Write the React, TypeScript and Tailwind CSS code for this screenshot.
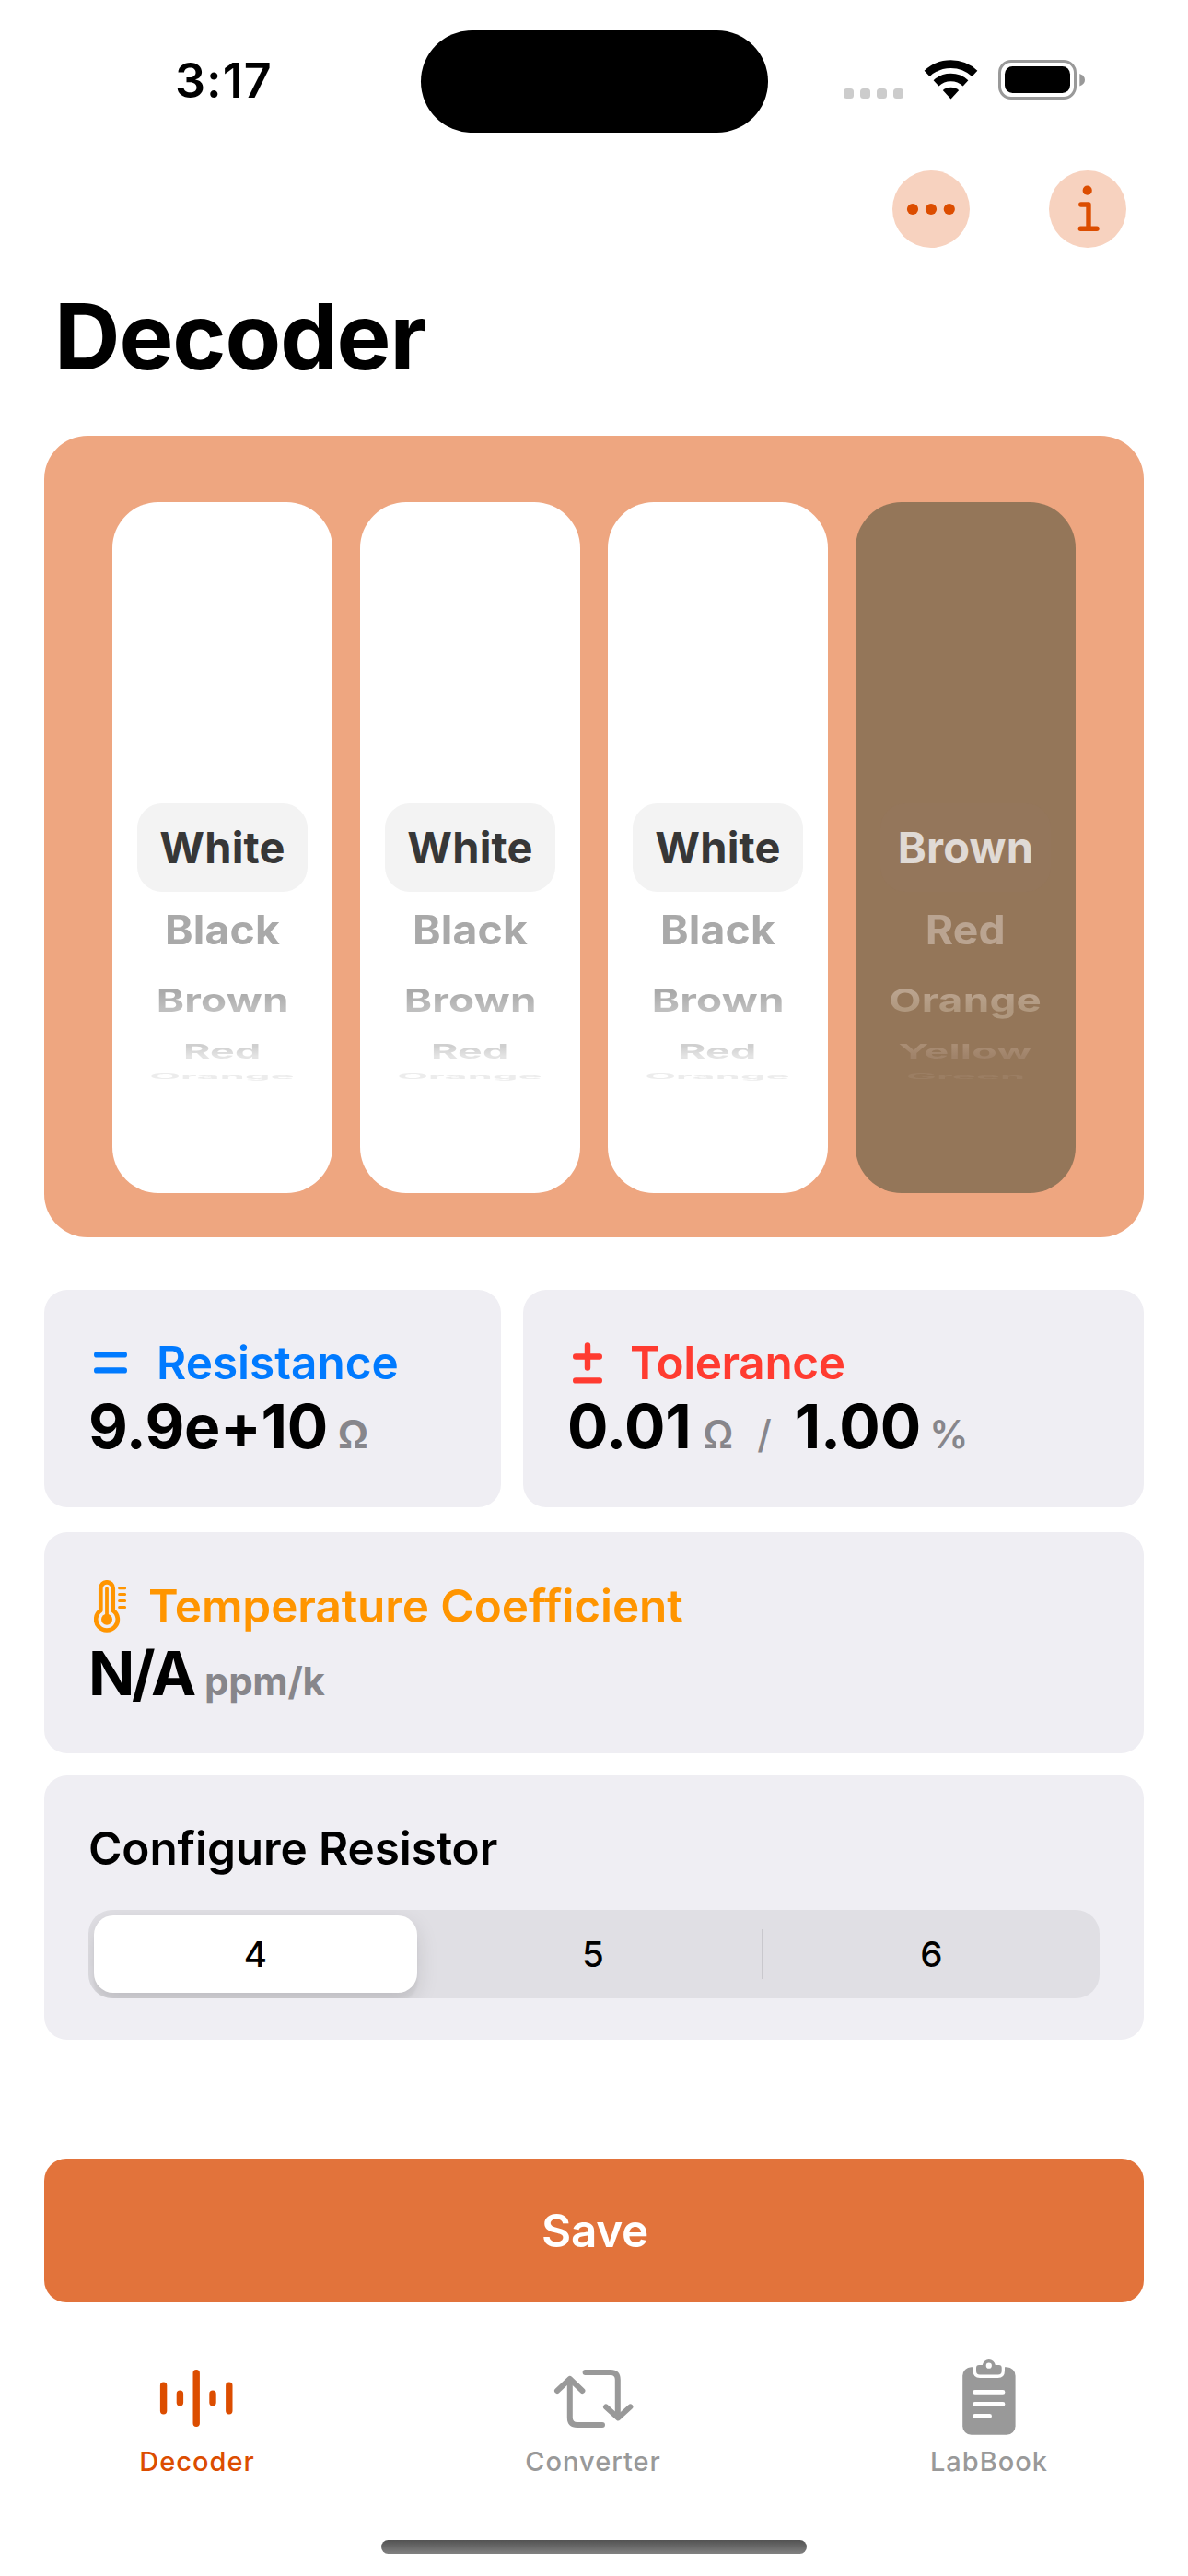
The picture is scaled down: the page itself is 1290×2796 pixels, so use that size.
import type { ReactNode } from 'react';

type PickerTheme = 'light' | 'brown';

const rowText: Record<PickerTheme, string[]> = {
  light: [
    'text-[#373737]',
    'text-[#a9a9a9]',
    'bg-linear-to-b from-[#aaaaaa] from-30% to-[#bfbfbf] to-70% bg-clip-text text-transparent',
    'bg-linear-to-b from-[#cfcfcf] from-30% to-[#e4e4e4] to-70% bg-clip-text text-transparent',
    'text-[#ececec]',
  ],
  brown: [
    'text-[#e0dad5]',
    'text-[#baa491]',
    'bg-linear-to-b from-[#baa38e] from-30% to-[#b0987f] to-70% bg-clip-text text-transparent',
    'bg-linear-to-b from-[#a98d74] from-30% to-[#a0836a] to-70% bg-clip-text text-transparent',
    'text-[#9b7e63]',
  ],
};

const rowBox = ['h-[96px]', 'h-[82px]', 'h-[71px]', 'h-[39px]', 'h-[15px]'];

// Rows flatten as they roll away over the edge of the wheel.
const rowTilt = [
  '',
  'scale-x-[0.985] scale-y-[0.94]',
  'scale-x-[0.975] scale-y-[0.73]',
  'scale-x-[0.955] scale-y-[0.46]',
  'scale-x-[0.925] scale-y-[0.15]',
];

function PickerColumn({ items, theme }: { items: string[]; theme: PickerTheme }) {
  return (
    <div
      className={`flex h-[750px] w-[239px] flex-col items-center overflow-hidden rounded-[50px] pt-[327px] ${
        theme === 'light' ? 'bg-white' : 'bg-[#947659]'
      }`}
    >
      {items.map((item, i) => (
        <div
          key={item}
          className={`flex w-[185px] shrink-0 items-center justify-center ${rowBox[i]} ${
            i === 0 ? (theme === 'light' ? 'rounded-[27px] bg-[#f3f3f3]' : 'rounded-[27px] bg-[#94765b]') : ''
          }`}
        >
          <span
            className={`block text-[47px] leading-[60px] font-[660] tracking-[0.2px] whitespace-nowrap ${rowTilt[i]} ${rowText[theme][i]}`}
          >
            {item}
          </span>
        </div>
      ))}
    </div>
  );
}

function WifiIcon() {
  return (
    <svg width="59" height="43" viewBox="0 0 59 43" className="ml-[22px]">
      <path d="M3.6 14.8 A38 38 0 0 1 55.4 14.8" fill="none" stroke="#000" strokeWidth="8.6" />
      <path d="M13.5 25.3 A23.5 23.5 0 0 1 45.5 25.3" fill="none" stroke="#000" strokeWidth="8.4" />
      <path d="M29.5 42.4 L20.8 33 A13.2 13.2 0 0 1 38.2 33 Z" fill="#000" />
    </svg>
  );
}

function BatteryIcon() {
  return (
    <svg width="95" height="43" viewBox="0 0 95 43" className="ml-[22px]">
      <rect x="1.5" y="1.5" width="82" height="40" rx="12.5" fill="none" stroke="#999" strokeWidth="3" />
      <rect x="7" y="7" width="71" height="29" rx="8.5" fill="#000" />
      <path d="M88.3 15 C92 16.5 94 18.5 94 21.7 C94 24.9 92 27 88.3 28.5 Z" fill="#999" />
    </svg>
  );
}

function StatusBar() {
  return (
    <div className="flex h-[185px] pt-[33px]">
      <div className="flex h-[111px] w-[457px] items-center pb-[1px] pl-[190px]">
        <span className="text-[52px] leading-none font-semibold tracking-[1px]">3:17</span>
      </div>
      <div className="h-[111px] w-[377px] rounded-full bg-black" />
      <div className="mt-8 ml-[82px] flex h-[43px] items-start">
        <div className="mt-[31px] flex gap-[7px]">
          <i className="size-[11px] rounded-[3.5px] bg-[#cccccc]" />
          <i className="size-[11px] rounded-[3.5px] bg-[#cccccc]" />
          <i className="size-[11px] rounded-[3.5px] bg-[#cccccc]" />
          <i className="size-[11px] rounded-[3.5px] bg-[#cccccc]" />
        </div>
        <WifiIcon />
        <BatteryIcon />
      </div>
    </div>
  );
}

function RoundButton({ children }: { children: ReactNode }) {
  return (
    <button className="size-[84px] rounded-full bg-[#f7d2bf]">
      <svg width="84" height="84" viewBox="0 0 84 84" fill="#dc4d00" stroke="none">
        {children}
      </svg>
    </button>
  );
}

function Label({ icon, children, className }: { icon: ReactNode; children: string; className: string }) {
  return (
    <div className={`flex items-center pl-[6px] text-[49.5px] font-[560] whitespace-nowrap ${className}`}>
      {icon}
      <span>{children}</span>
    </div>
  );
}

function EqualIcon() {
  return (
    <svg width="36" height="24" viewBox="0 0 36 24" className="mr-[32px]" stroke="#007aff" strokeWidth="6.4" strokeLinecap="round">
      <path d="M3.2 3.4 H32.8 M3.2 20.4 H32.8" />
    </svg>
  );
}

function PlusMinusIcon() {
  return (
    <svg width="32" height="45" viewBox="0 0 32 45" className="mr-[30px]" stroke="#ff3b30" strokeWidth="6.4" strokeLinecap="round">
      <path d="M3.2 15.5 H28.8 M16 3.4 V27.6 M3.2 41.4 H28.8" />
    </svg>
  );
}

function ThermometerIcon() {
  return (
    <svg width="36" height="58" viewBox="0 0 36 58" className="mr-[23px]" fill="none" stroke="#ff9500" strokeLinecap="round">
      <path d="M7.3 9 a6.7 6.7 0 0 1 13.4 0 V33 A11.8 11.8 0 1 1 7.3 33 Z" strokeWidth="4.7" strokeLinejoin="round" />
      <path d="M14 9.5 V42" strokeWidth="3.8" />
      <circle cx="14" cy="42.8" r="6" fill="#ff9500" stroke="none" />
      <path d="M27.6 8.7 H33.6 M27.6 15.6 H33.6 M27.6 22.5 H33.6 M27.6 29.4 H33.6" strokeWidth="3" />
    </svg>
  );
}

function WaveIcon() {
  return (
    <svg width="90" height="90" viewBox="0 0 90 90" fill="none" stroke="#dc4d00" strokeWidth="7.4" strokeLinecap="round">
      <path d="M7.6 31.3 V58.7 M25.4 40.2 V49.8 M43.2 17.7 V72.3 M61 40.2 V49.8 M78.8 31.3 V58.7" />
    </svg>
  );
}

function RepeatIcon() {
  return (
    <svg width="90" height="90" viewBox="0 0 90 90" fill="none" stroke="#999999" strokeWidth="6" strokeLinecap="round" strokeLinejoin="round">
      <path d="M5 37 L18.8 24 L32.4 37" />
      <path d="M18.8 25 V66 Q18.8 74 26.8 74 H54" />
      <path d="M35.6 17 H63 Q70.8 17 70.8 25 V64" />
      <path d="M58 54.4 L71.3 66.4 L84.4 54.4" />
    </svg>
  );
}

function ClipboardIcon() {
  return (
    <svg width="90" height="90" viewBox="0 0 90 90">
      <rect x="15.2" y="11.2" width="57.4" height="73.6" rx="9.5" fill="#999999" />
      <path d="M26.6 9 V15 Q26.6 23 34 23 H53.5 Q61 23 61 15 V9 Z" fill="#fff" />
      <path
        fillRule="evenodd"
        fill="#999999"
        d="M33 9 H36.8 A7.1 7.1 0 0 1 50.8 9 H54.7 Q57.7 9 57.7 12 V15.5 Q57.7 19.5 53.7 19.5 H34 Q30 19.5 30 15.5 V12 Q30 9 33 9 Z M43.8 6.6 A3.1 3.1 0 1 0 43.8 12.8 A3.1 3.1 0 1 0 43.8 6.6 Z"
      />
      <path d="M28.6 38.4 H59 M28.6 51.4 H59 M28.6 64.4 H44.6" stroke="#fff" strokeWidth="4.8" strokeLinecap="round" />
    </svg>
  );
}

function Tab({ icon, label, active }: { icon: ReactNode; label: string; active?: boolean }) {
  return (
    <div className="flex w-[430px] flex-col items-center">
      {icon}
      <span
        className={`mt-[5px] pr-[2px] text-[29px] leading-[37px] font-medium tracking-[1px] ${active ? 'text-[#dc4d00]' : 'text-[#999999]'}`}
      >
        {label}
      </span>
    </div>
  );
}

const digits = ['White', 'Black', 'Brown', 'Red', 'Orange'];

export default function App() {
  return (
    <div className="flex h-[2796px] w-[1290px] flex-col overflow-hidden bg-white font-['Inter',sans-serif] text-black">
      <StatusBar />

      <div className="flex h-[84px] justify-end gap-[86px] pr-[67px]">
        <RoundButton>
          <circle cx="22" cy="42" r="6.1" />
          <circle cx="42" cy="42" r="6.1" />
          <circle cx="61.8" cy="42" r="6.1" />
        </RoundButton>
        <RoundButton>
          <circle cx="41.7" cy="21.7" r="5.1" />
          <path
            d="M34.8 37 H43 V63 M34.3 63.3 H52"
            fill="none"
            stroke="#dc4d00"
            strokeWidth="5.4"
            strokeLinecap="round"
            strokeLinejoin="round"
          />
        </RoundButton>
      </div>

      <h1 className="mt-9 pl-[59px] text-[99px] leading-[120px] font-bold tracking-[-1.05px]">Decoder</h1>

      <div className="mx-12 mt-12 flex h-[870px] justify-center gap-[30px] rounded-[47px] bg-[#eea680] pt-[72px]">
        <PickerColumn items={digits} theme="light" />
        <PickerColumn items={digits} theme="light" />
        <PickerColumn items={digits} theme="light" />
        <PickerColumn items={['Brown', 'Red', 'Orange', 'Yellow', 'Green']} theme="brown" />
      </div>

      <div className="mx-12 mt-[57px] flex gap-6">
        <div className="h-[236px] w-[496px] rounded-[25px] bg-[#efeef3] px-12 pt-[49px]">
          <Label icon={<EqualIcon />} className="leading-[60px] tracking-[0px] text-[#007aff]">
            Resistance
          </Label>
          <div className="flex items-baseline leading-[79px] font-bold">
            <span className="text-[66px] tracking-[-0.3px]">9.9e+10</span>
            <span className="ml-[11px] text-[42px] leading-none font-bold text-[#87868b]">Ω</span>
          </div>
        </div>
        <div className="h-[236px] w-[674px] rounded-[25px] bg-[#efeef3] px-12 pt-[49px]">
          <Label icon={<PlusMinusIcon />} className="leading-[60px] tracking-[-0.4px] text-[#ff3b30]">
            Tolerance
          </Label>
          <div className="flex items-baseline leading-[79px] font-bold">
            <span className="text-[66px] tracking-[-0.3px]">0.01</span>
            <span className="ml-[13px] text-[42px] leading-none font-semibold text-[#87868b]">Ω</span>
            <span className="ml-[26px] text-[42px] leading-none font-medium text-[#87868b]">/</span>
            <span className="ml-[25px] text-[66px]">1.00</span>
            <span className="ml-[9px] text-[42px] leading-none font-semibold text-[#87868b]">%</span>
          </div>
        </div>
      </div>

      <div className="mx-12 mt-[27px] h-[240px] rounded-[25px] bg-[#efeef3] px-12 pt-[49px]">
        <Label icon={<ThermometerIcon />} className="leading-[63px] tracking-[-0.1px] text-[#ff9500]">
          Temperature Coefficient
        </Label>
        <div className="flex items-baseline leading-[82px] font-bold">
          <span className="text-[66px] tracking-[-3.2px]">N/A</span>
          <span className="ml-[12px] text-[42px] leading-none font-bold tracking-[-0.3px] text-[#87868b]">ppm/k</span>
        </div>
      </div>

      <div className="mx-12 mt-6 h-[287px] rounded-[25px] bg-[#efeef3] px-12 pt-12">
        <div className="text-[49.5px] leading-[62px] font-[560] tracking-[-0.1px]">Configure Resistor</div>
        <div className="mt-9 flex h-[96px] items-center overflow-hidden rounded-[26px] bg-[#e0dfe4] pl-[6px] text-[38.5px] font-medium">
          <div className="flex h-[84px] w-[351px] items-center justify-center rounded-[21px] bg-white pt-[1px] shadow-[0_9px_24px_rgba(0,0,0,0.12),0_9px_3px_rgba(0,0,0,0.04)]">
            4
          </div>
          <div className="ml-2 flex w-[366px] justify-center pt-[1px]">5</div>
          <div className="h-[54px] w-[2px] bg-[#c9c8cd]" />
          <div className="flex flex-1 justify-center pt-[1px]">6</div>
        </div>
      </div>

      <button className="mx-12 mt-[129px] flex h-[156px] items-center justify-center rounded-[24px] bg-[#e2733b] pt-[1px] pl-[2px] text-[49.5px] font-[560] tracking-[-0.3px] text-white">
        Save
      </button>

      <div className="mt-[59px] flex">
        <Tab icon={<WaveIcon />} label="Decoder" active />
        <Tab icon={<RepeatIcon />} label="Converter" />
        <Tab icon={<ClipboardIcon />} label="LabBook" />
      </div>

      <div className="mx-auto mt-[67px] h-[15px] w-[462px] shrink-0 rounded-full bg-linear-to-b from-[#525252] to-[#828282]" />
    </div>
  );
}
